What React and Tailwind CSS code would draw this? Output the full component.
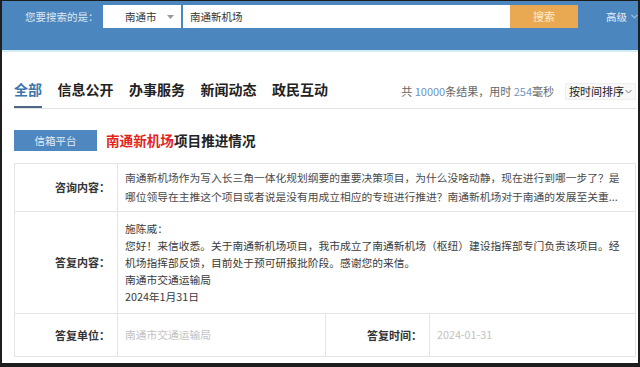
export default function App() {
  const font = { fontFamily: '"Noto Sans CJK SC", "Noto Sans", sans-serif' };
  const tabs = ["信息公开", "办事服务", "新闻动态", "政民互动"];
  return (
    <div
      className="w-[640px] h-[367px] overflow-hidden bg-white border-l-2 border-r-2 border-t border-b-4 border-[#1e1e1e] flex flex-col"
      style={font}
    >
      {/* Header */}
      <div className="h-[49px] shrink-0 bg-[#4b86be] border-b-2 border-[#d3edf7] box-content">
        <div className="flex items-start pt-[4px] pl-[23px] whitespace-nowrap">
          <div className="w-[78px] shrink-0 h-[23px] flex items-center text-[10.5px] text-[#dfeaf4]">
            您要搜索的是：
          </div>
          <div className="w-[78px] shrink-0 h-[23px] bg-white flex items-center pl-[22px] pr-[7px]">
            <span className="text-[10.5px] text-[#333]">南通市</span>
            <svg className="ml-auto" width="7" height="4" viewBox="0 0 7 4">
              <path d="M0 0 L7 0 L3.5 4 Z" fill="#9a9a9a" />
            </svg>
          </div>
          <div className="ml-[2px] w-[327px] shrink-0 h-[23px] bg-white flex items-center pl-[7px]">
            <span className="text-[10.5px] text-[#333]">南通新机场</span>
          </div>
          <div className="w-[68px] shrink-0 h-[23px] bg-[#e8a952] flex items-center justify-center">
            <span className="text-[11px] text-[#fbecd3]">搜索</span>
          </div>
          <div className="ml-[28px] shrink-0 h-[23px] flex items-center gap-[4px]">
            <span className="text-[10.5px] text-[#e6eef6]">高级</span>
            <svg width="7" height="5" viewBox="0 0 7 5">
              <path d="M0.5 0.8 L3.5 3.8 L6.5 0.8" stroke="#a9c6e4" strokeWidth="1.1" fill="none" />
            </svg>
          </div>
        </div>
      </div>

      {/* Content */}
      <div className="ml-[12px] mr-[2px] flex flex-col">
        {/* Tabs row */}
        <div className="mt-[27px] flex items-start border-b border-[#e2e2e2]">
          <div className="text-[14px] leading-[20px] font-bold text-[#3b75ad] pb-[7px] border-b-2 border-[#4b6784]">
            全部
          </div>
          {tabs.map((t) => (
            <div
              key={t}
              className="ml-[15.5px] text-[14px] leading-[20px] font-bold text-[#222] pb-[7px] border-b-2 border-transparent"
            >
              {t}
            </div>
          ))}
          <div className="ml-auto mt-[4px] flex items-center">
            <div className="text-[11px] text-[#666] whitespace-nowrap">
              共 <span className="text-[#6f94bd]">10000</span>条结果，用时 <span className="text-[#6f94bd]">254</span>毫秒
            </div>
            <div className="ml-[11px] h-[17px] w-[71px] bg-[#f8f8f8] border border-[#efefef] flex items-center pl-[3px] pr-[3px]">
              <span className="text-[11px] text-[#222] whitespace-nowrap">按时间排序</span>
              <svg className="ml-auto" width="7" height="5" viewBox="0 0 7 5">
                <path d="M0.5 1 L3.5 4 L6.5 1" stroke="#777" strokeWidth="1" fill="none" />
              </svg>
            </div>
          </div>
        </div>

        {/* Section title */}
        <div className="mt-[21px] flex items-center">
          <div className="w-[83px] h-[21px] bg-[#4f87c0] flex items-center justify-center text-[10.5px] text-[#e0ebf6]">
            信箱平台
          </div>
          <div className="ml-[9px] text-[13.6px] font-bold text-[#222] whitespace-nowrap">
            <span className="text-[#e3241c]">南通新机场</span>项目推进情况
          </div>
        </div>

        {/* Table */}
        <div className="mt-[12px] border border-[#e4e4e4] text-[10.75px]">
          <div className="flex h-[48px] border-b border-[#e4e4e4]">
            <div className="w-[103px] shrink-0 border-r border-[#e4e4e4] flex items-center justify-end pr-[7px] font-bold text-[#333] text-[11px]">
              咨询内容：
            </div>
            <div className="pl-[7px] flex flex-col justify-center text-[#4a4a4a] leading-[18.5px] whitespace-nowrap">
              <div>南通新机场作为写入长三角一体化规划纲要的重要决策项目，为什么没啥动静，现在进行到哪一步了？是</div>
              <div>哪位领导在主推这个项目或者说是没有用成立相应的专班进行推进？南通新机场对于南通的发展至关重...</div>
            </div>
          </div>
          <div className="flex h-[102px] border-b border-[#e4e4e4]">
            <div className="w-[103px] shrink-0 border-r border-[#e4e4e4] flex items-center justify-end pr-[7px] font-bold text-[#333] text-[11px]">
              答复内容：
            </div>
            <div className="pl-[7px] flex flex-col justify-center text-[#3a3a3a] leading-[17px] whitespace-nowrap">
              <div>施陈威：</div>
              <div>您好！来信收悉。关于南通新机场项目，我市成立了南通新机场（枢纽）建设指挥部专门负责该项目。经</div>
              <div>机场指挥部反馈，目前处于预可研报批阶段。感谢您的来信。</div>
              <div>南通市交通运输局</div>
              <div>2024年1月31日</div>
            </div>
          </div>
          <div className="flex h-[42px]">
            <div className="w-[103px] shrink-0 border-r border-[#e4e4e4] flex items-center justify-end pr-[7px] font-bold text-[#333] text-[11px]">
              答复单位：
            </div>
            <div className="w-[208px] shrink-0 border-r border-[#e4e4e4] pl-[7px] flex items-center text-[#c2c2c2]">
              南通市交通运输局
            </div>
            <div className="w-[104px] shrink-0 border-r border-[#e4e4e4] flex items-center justify-end pr-[7px] font-bold text-[#333] text-[11px]">
              答复时间：
            </div>
            <div className="pl-[7px] flex items-center text-[#c2c2c2]">2024-01-31</div>
          </div>
        </div>
      </div>
    </div>
  );
}
